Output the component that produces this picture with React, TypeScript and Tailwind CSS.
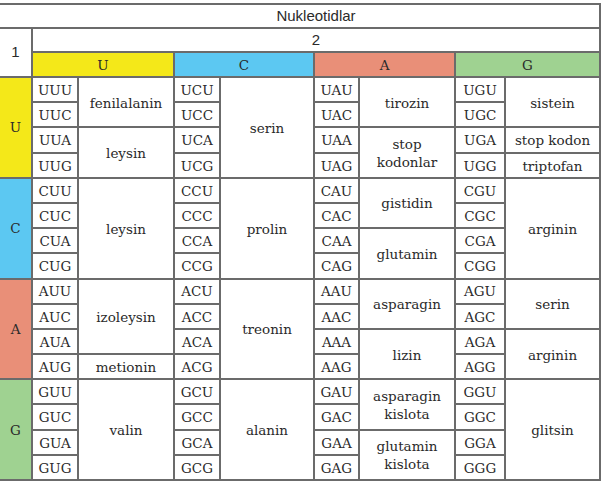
const BASES = ["U", "C", "A", "G"];

const BASE_BG = ["bg-[#f4e819]", "bg-[#5cc8f2]", "bg-[#e98f78]", "bg-[#9fd291]"];

// class names are written out here so Tailwind picks them up
const COL = ["", "col-start-1", "col-start-2", "col-start-3", "col-start-4", "col-start-5", "col-start-6", "col-start-7", "col-start-8", "col-start-9"];
const ROW = ["", "row-start-1", "row-start-2", "row-start-3", "row-start-4", "row-start-5", "row-start-6", "row-start-7", "row-start-8", "row-start-9", "row-start-10", "row-start-11", "row-start-12", "row-start-13", "row-start-14", "row-start-15", "row-start-16", "row-start-17", "row-start-18", "row-start-19"];
const SPAN = ["", "row-span-1", "row-span-2", "row-span-3", "row-span-4"];
const HEAD_COL = ["col-start-2 col-span-2", "col-start-4 col-span-2", "col-start-6 col-span-2", "col-start-8 col-span-2"];

// [column, first row, row span, name]
const AMINO: [number, number, number, string][] = [
  [3, 4, 2, "fenilalanin"],
  [3, 6, 2, "leysin"],
  [5, 4, 4, "serin"],
  [7, 4, 2, "tirozin"],
  [7, 6, 2, "stop\nkodonlar"],
  [9, 4, 2, "sistein"],
  [9, 6, 1, "stop kodon"],
  [9, 7, 1, "triptofan"],

  [3, 8, 4, "leysin"],
  [5, 8, 4, "prolin"],
  [7, 8, 2, "gistidin"],
  [7, 10, 2, "glutamin"],
  [9, 8, 4, "arginin"],

  [3, 12, 3, "izoleysin"],
  [3, 15, 1, "metionin"],
  [5, 12, 4, "treonin"],
  [7, 12, 2, "asparagin"],
  [7, 14, 2, "lizin"],
  [9, 12, 2, "serin"],
  [9, 14, 2, "arginin"],

  [3, 16, 4, "valin"],
  [5, 16, 4, "alanin"],
  [7, 16, 2, "asparagin\nkislota"],
  [7, 18, 2, "glutamin\nkislota"],
  [9, 16, 4, "glitsin"],
];

const cell = "flex items-center justify-center text-center bg-white";
const sans = "font-['Liberation_Sans',Arial,sans-serif] text-[15px]";

export default function App() {
  const codons: { t: string; c: string }[] = [];
  BASES.forEach((a, i) =>
    BASES.forEach((b, j) =>
      BASES.forEach((c, k) =>
        codons.push({ t: a + b + c, c: `${COL[2 + 2 * j]} ${ROW[4 + 4 * i + k]}` }),
      ),
    ),
  );

  return (
    <div className="w-[602px] h-[484px] bg-white pt-[3px] font-['DejaVu_Serif',Georgia,serif] text-[13.5px] text-[#2a2a2a]">
      <div className="grid h-[478px] w-[601px] grid-cols-[31px_44px_94px_44px_92px_43px_94px_48px_93px] grid-rows-[22px_22px_23px_repeat(16,minmax(0,1fr))] gap-[2px] bg-[#6b6b6b] pt-[2px] pr-[2px] pb-[2px]">
        <div className={`${cell} ${sans} col-start-1 col-span-9 row-start-1 pl-[33px]`}>
          Nukleotidlar
        </div>
        <div className={`${cell} ${sans} col-start-1 row-start-2 row-span-2`}>1</div>
        <div className={`${cell} ${sans} col-start-2 col-span-8 row-start-2`}>2</div>

        {BASES.map((b, i) => (
          <div key={"h" + b} className={`flex items-center justify-center pt-px ${BASE_BG[i]} ${HEAD_COL[i]} row-start-3`}>
            {b}
          </div>
        ))}

        {BASES.map((b, i) => (
          <div
            key={"l" + b}
            className={`flex items-center justify-center ${BASE_BG[i]} col-start-1 ${ROW[4 + 4 * i]} row-span-4`}
          >
            {b}
          </div>
        ))}

        {codons.map((x) => (
          <div key={x.t} className={`${cell} pt-px ${x.c}`}>
            {x.t}
          </div>
        ))}

        {AMINO.map(([col, row, span, name], n) => (
          <div
            key={n}
            className={`${cell} pt-px ${COL[col]} ${ROW[row]} ${SPAN[span]} whitespace-pre-line leading-[18px]`}
          >
            {name}
          </div>
        ))}
      </div>
    </div>
  );
}
